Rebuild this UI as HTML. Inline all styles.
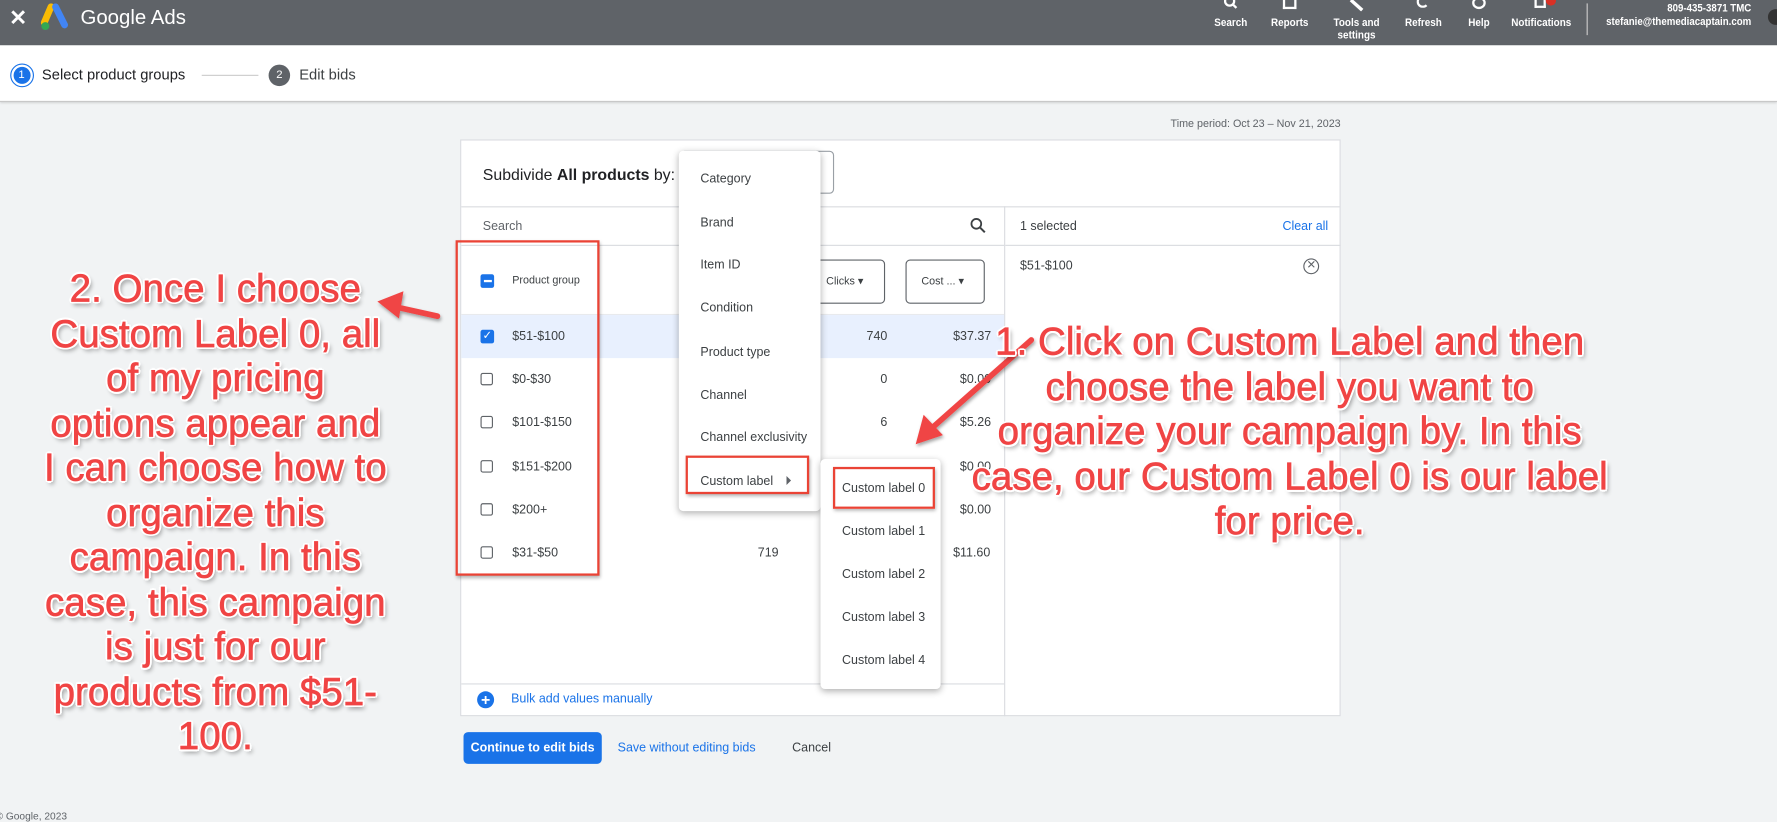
<!DOCTYPE html>
<html><head><meta charset="utf-8"><style>
*{margin:0;padding:0;box-sizing:border-box}
html,body{width:1777px;height:819px;overflow:hidden;background:#f1f3f4;font-family:"Liberation Sans",Arial,sans-serif}
#w{position:absolute;left:0;top:0;width:1568px;height:723px;transform:scale(1.13329);transform-origin:0 0;background:#f1f3f4}
.a{position:absolute;white-space:nowrap}
.top{position:absolute;left:0;top:0;width:1568px;height:40px;background:#5f6368}
.tl{position:absolute;top:15px;font-size:9.5px;font-weight:bold;color:#fff;text-align:center;transform:translateX(-50%) scaleX(.92);line-height:11px}
.step{position:absolute;left:0;top:40px;width:1568px;height:50px;background:#fff;border-bottom:1px solid #c8c8c8;box-shadow:0 1px 2px rgba(0,0,0,.15)}
.panel{position:absolute;left:406px;top:123px;width:777px;height:509px;background:#fff;border:1px solid #dadce0}
.t11{font-size:11px;color:#3c4043}
.cb{position:absolute;width:11px;height:11px;border:1.5px solid #5f6368;border-radius:2px;background:#fff}
.menu{position:absolute;background:#fff;border-radius:4px;box-shadow:0 2px 6px rgba(0,0,0,.3)}
.mi{position:absolute;font-size:11px;color:#3c4043;transform:translateY(-50%)}
.ann{position:absolute;color:#f04444;font-size:34px;text-align:center;line-height:39.5px;white-space:nowrap;-webkit-text-stroke:0.6px #f04444;
text-shadow:2px 0 0 #fff,-2px 0 0 #fff,0 2px 0 #fff,0 -2px 0 #fff,1.5px 1.5px 0 #fff,-1.5px 1.5px 0 #fff,1.5px -1.5px 0 #fff,-1.5px -1.5px 0 #fff,2px 3px 4px rgba(0,0,0,.45)}
.rb{position:absolute;border:2.5px solid #ea4335;box-shadow:1px 2px 3px rgba(0,0,0,.3)}
</style></head><body><div id="w">
<div class="top">
 <div class="a" style="left:8px;top:5px;color:#fff;font-size:19px;font-weight:bold">✕</div>
 <svg class="a" style="left:36px;top:3px" width="26" height="24" viewBox="0 0 26 24"><path d="M9 3 L3 17" stroke="#fbbc04" stroke-width="6" stroke-linecap="round"/><path d="M13 3 L21 19" stroke="#4285f4" stroke-width="6" stroke-linecap="round"/><circle cx="4" cy="20" r="3.5" fill="#34a853"/></svg>
 <div class="a" style="left:71px;top:5px;color:#fff;font-size:18px">Google Ads</div>
 <svg class="a" style="left:1080px;top:0" width="12" height="8"><circle cx="5" cy="1" r="4" stroke="#fff" stroke-width="2" fill="none"/><path d="M8 4 L11 7" stroke="#fff" stroke-width="2"/></svg>
 <div class="a" style="left:1132px;top:0;width:12px;height:8px;border:2px solid #fff;border-top:none"></div>
 <svg class="a" style="left:1190px;top:0" width="14" height="10"><path d="M2 0 L12 9" stroke="#fff" stroke-width="3"/></svg>
 <div class="a" style="left:1250px;top:-4px;width:11px;height:11px;border:2px solid #fff;border-radius:50%;border-right-color:transparent"></div>
 <div class="a" style="left:1299px;top:-3px;width:12px;height:11px;border:2px solid #fff;border-radius:50%"></div>
 <div class="a" style="left:1354px;top:-2px;width:10px;height:9px;border:2px solid #fff;border-top:none"></div>
 <div class="a" style="left:1364px;top:-4px;width:9px;height:9px;background:#d93025;border-radius:50%"></div>
 <div class="tl" style="left:1086px">Search</div>
 <div class="tl" style="left:1138px">Reports</div>
 <div class="tl" style="left:1197px">Tools and<br>settings</div>
 <div class="tl" style="left:1256px">Refresh</div>
 <div class="tl" style="left:1305px">Help</div>
 <div class="tl" style="left:1360px">Notifications</div>
 <div class="a" style="left:1400px;top:3px;width:1px;height:28px;background:#ccc"></div>
 <div class="a" style="right:23px;top:2px;color:#fff;font-size:9.5px;font-weight:bold;text-align:right;line-height:12px;transform:scaleX(.9);transform-origin:right">809-435-3871 TMC<br>stefanie@themediacaptain.com</div>
 <div class="a" style="left:1560px;top:8px;width:14px;height:14px;border-radius:50%;background:#333"></div>
</div>
<div class="step">
 <div class="a" style="left:9px;top:16px;width:21px;height:21px;border-radius:50%;border:1.5px solid #1a73e8;padding:1.5px"><div style="width:15px;height:15px;border-radius:50%;background:#1a73e8;color:#fff;font-size:10px;text-align:center;line-height:15px">1</div></div>
 <div class="a" style="left:37px;top:18px;font-size:13px;color:#202124">Select product groups</div>
 <div class="a" style="left:178px;top:26px;width:50px;height:1px;background:#ccc"></div>
 <div class="a" style="left:237px;top:17px;width:19px;height:19px;border-radius:50%;background:#5f6368;color:#fff;font-size:10px;text-align:center;line-height:19px">2</div>
 <div class="a" style="left:264px;top:18px;font-size:13px;color:#3c4043">Edit bids</div>
</div>
<div class="a" style="right:385px;top:104px;font-size:9.5px;color:#5f6368">Time period: Oct 23 – Nov 21, 2023</div>
<div class="panel">
 <div class="a" style="left:19px;top:22px;font-size:14px;color:#202124">Subdivide <b>All products</b> by:</div>
 <div class="a" style="left:193px;top:9px;width:136px;height:38px;border:1px solid #9aa0a6;border-radius:4px"></div>
 <div class="a" style="left:0;top:58px;width:775px;height:1px;background:#dadce0"></div>
 <div class="a" style="left:479px;top:58px;width:1px;height:450px;background:#dadce0"></div>
 <div class="a t11" style="left:19px;top:70px;color:#5f6368">Search</div>
 <svg class="a" style="left:449px;top:68px" width="14" height="14"><circle cx="5.5" cy="5.5" r="4.3" stroke="#3c4043" stroke-width="1.6" fill="none"/><path d="M9 9 L13 13" stroke="#3c4043" stroke-width="1.8"/></svg>
 <div class="a" style="left:0;top:92px;width:479px;height:1px;background:#dadce0"></div>
 <div class="a" style="left:493px;top:70px;font-size:11px;color:#3c4043">1 selected</div>
 <div class="a" style="right:10px;top:70px;font-size:11px;color:#1a73e8">Clear all</div>
 <div class="a" style="left:480px;top:92px;width:296px;height:1px;background:#dadce0"></div>
 <div class="a" style="left:493px;top:105px;font-size:11px;color:#3c4043">$51-$100</div>
 <div class="a" style="left:743px;top:104px;width:14px;height:14px;border:1.5px solid #5f6368;border-radius:50%;font-size:10px;line-height:11px;text-align:center;color:#5f6368">✕</div>
 <div class="a" style="left:0;top:153px;width:479px;height:1px;background:#e8eaed"></div>
 <div class="a" style="left:0;top:154px;width:479px;height:38px;background:#e8f0fe"></div>
 <div class="a" style="left:17px;top:118px;width:12px;height:12px;background:#1a73e8;border-radius:2px"><div style="margin:5px 2.5px;width:7px;height:2px;background:#fff"></div></div>
 <div class="a" style="left:45px;top:118px;font-size:9.5px;color:#3c4043">Product group</div>
 <div class="a" style="left:313px;top:105px;width:61px;height:39px;border:1px solid #5f6368;border-radius:4px;font-size:9.5px;color:#3c4043;padding:13px 0 0 8px">Clicks ▾</div>
 <div class="a" style="left:392px;top:105px;width:70px;height:39px;border:1px solid #5f6368;border-radius:4px;font-size:9.5px;color:#3c4043;padding:13px 0 0 13px">Cost ... ▾</div>
 <div class="a" style="left:17px;top:167px;width:12px;height:12px;background:#1a73e8;border-radius:2px;color:#fff;font-size:10px;line-height:12px;text-align:center">✓</div>
 <div class="cb" style="left:17px;top:205px"></div>
 <div class="cb" style="left:17px;top:243px"></div>
 <div class="cb" style="left:17px;top:282px"></div>
 <div class="cb" style="left:17px;top:320px"></div>
 <div class="cb" style="left:17px;top:358px"></div>
 <div class="a t11" style="left:45px;top:167px">$51-$100</div>
 <div class="a t11" style="left:45px;top:205px">$0-$30</div>
 <div class="a t11" style="left:45px;top:243px">$101-$150</div>
 <div class="a t11" style="left:45px;top:282px">$151-$200</div>
 <div class="a t11" style="left:45px;top:320px">$200+</div>
 <div class="a t11" style="left:45px;top:358px">$31-$50</div>
 <div class="a t11" style="right:399px;top:167px">740</div>
 <div class="a t11" style="right:399px;top:205px">0</div>
 <div class="a t11" style="right:399px;top:243px">6</div>
 <div class="a t11" style="right:495px;top:358px">719</div>
 <div class="a t11" style="left:434px;top:167px">$37.37</div>
 <div class="a t11" style="left:440px;top:205px">$0.00</div>
 <div class="a t11" style="left:440px;top:243px">$5.26</div>
 <div class="a t11" style="left:440px;top:282px">$0.00</div>
 <div class="a t11" style="left:440px;top:320px">$0.00</div>
 <div class="a t11" style="left:434px;top:358px">$11.60</div>
 <div class="a" style="left:0;top:479px;width:479px;height:1px;background:#dadce0"></div>
 <div class="a" style="left:14px;top:486px;width:15px;height:15px;border-radius:50%;background:#1a73e8;color:#fff;font-size:14px;line-height:15px;text-align:center;font-weight:bold">+</div>
 <div class="a" style="left:44px;top:487px;font-size:11px;color:#1a73e8">Bulk add values manually</div>
</div>
<div class="menu" style="left:599px;top:133px;width:125px;height:318px">
 <div class="mi" style="left:19px;top:25px">Category</div>
 <div class="mi" style="left:19px;top:64px">Brand</div>
 <div class="mi" style="left:19px;top:101px">Item ID</div>
 <div class="mi" style="left:19px;top:139px">Condition</div>
 <div class="mi" style="left:19px;top:178px">Product type</div>
 <div class="mi" style="left:19px;top:216px">Channel</div>
 <div class="mi" style="left:19px;top:253px">Channel exclusivity</div>
 <div class="mi" style="left:19px;top:292px">Custom label</div>
 <div class="a" style="left:95px;top:287px;border-left:4px solid #5f6368;border-top:4px solid transparent;border-bottom:4px solid transparent"></div>
</div>
<div class="rb" style="left:605px;top:402px;width:109px;height:34px"></div>
<div class="menu" style="left:724px;top:405px;width:106px;height:203px">
 <div class="mi" style="left:19px;top:26px">Custom label 0</div>
 <div class="mi" style="left:19px;top:64px">Custom label 1</div>
 <div class="mi" style="left:19px;top:102px">Custom label 2</div>
 <div class="mi" style="left:19px;top:140px">Custom label 3</div>
 <div class="mi" style="left:19px;top:178px">Custom label 4</div>
</div>
<div class="rb" style="left:735px;top:412px;width:90px;height:37px"></div>
<div class="rb" style="left:402px;top:212px;width:127px;height:296px"></div>
<div class="a" style="left:409px;top:646px;width:122px;height:28px;background:#1a73e8;border-radius:4px;color:#fff;font-size:11px;font-weight:bold;text-align:center;line-height:28px">Continue to edit bids</div>
<div class="a" style="left:545px;top:654px;font-size:11px;color:#1a73e8">Save without editing bids</div>
<div class="a" style="left:699px;top:654px;font-size:11px;color:#3c4043">Cancel</div>
<div class="a" style="left:-4px;top:715px;font-size:9px;color:#5f6368">© Google, 2023</div>
<svg class="a" style="left:0;top:0" width="1568" height="723">
 <defs><filter id="s"><feDropShadow dx="1" dy="2" stdDeviation="1.5" flood-opacity=".35"/></filter></defs>
 <g filter="url(#s)" fill="#f04444">
  <path d="M386 279 L350 271" stroke="#f04444" stroke-width="5" stroke-linecap="round"/>
  <path d="M333 266 L356 257 L352 281 Z"/>
  <path d="M910 300 L822 378" stroke="#f04444" stroke-width="5" stroke-linecap="round"/>
  <path d="M808 392 L815 366 L832 384 Z"/>
 </g>
</svg>
<div class="ann" style="left:190px;top:236px;transform:translateX(-50%)">2. Once I choose<br>Custom Label 0, all<br>of my pricing<br>options appear and<br>I can choose how to<br>organize this<br>campaign. In this<br>case, this campaign<br>is just for our<br>products from $51-<br>100.</div>
<div class="ann" style="left:1138px;top:283px;transform:translateX(-50%)">1. Click on Custom Label and then<br>choose the label you want to<br>organize your campaign by. In this<br>case, our Custom Label 0 is our label<br>for price.</div>
</div></body></html>
